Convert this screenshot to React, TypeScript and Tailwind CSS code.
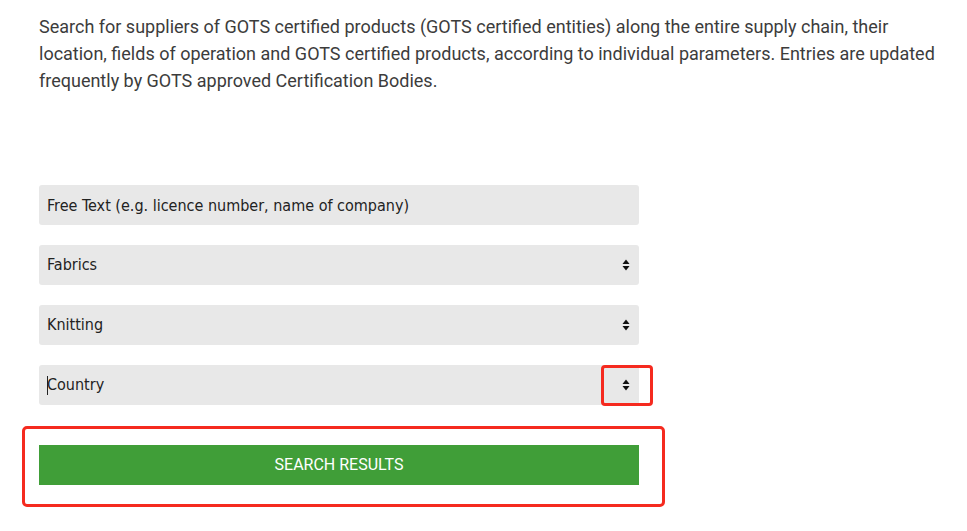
import { useState } from "react";

function Arrows() {
  return (
    <svg width="8" height="12" viewBox="0 0 8 12" className="shrink-0">
      <path d="M4 0.5 L7.5 5 L0.5 5 Z" fill="#111" />
      <path d="M4 11.5 L7.5 7 L0.5 7 Z" fill="#111" />
    </svg>
  );
}

function SelectField({ label, marked }: { label: string; marked?: boolean }) {
  return (
    <div className="relative flex h-10 w-[600px] items-center justify-between rounded-[3px] bg-[#e8e8e8] pl-2 pr-[9px]">
      <span className="text-[16px] text-[#222]">{label}</span>
      <Arrows />
      {marked && (
        <>
          <div className="pointer-events-none absolute left-2 top-[11px] h-[19px] w-px bg-[#222]" />
          <div className="pointer-events-none absolute left-[562px] top-0 h-[41px] w-[52px] rounded-[4px] border-[3px] border-[#f52a1f]" />
        </>
      )}
    </div>
  );
}

export default function App() {
  const [text, setText] = useState("");

  return (
    <div className="min-h-[531px] w-[967px] bg-white pl-[39px] pt-[13px]">
      <p
        className="w-[920px] text-[18px] leading-[27px] text-[#3c3c3c]"
        style={{ fontFamily: "Roboto, sans-serif" }}
      >
        Search for suppliers of GOTS certified products (GOTS certified entities) along the entire supply chain, their
        <br />
        location, fields of operation and GOTS certified products, according to individual parameters. Entries are updated
        <br />
        frequently by GOTS approved Certification Bodies.
      </p>

      <form
        className="mt-[91px] flex flex-col gap-5"
        style={{ fontFamily: '"DejaVu Sans Condensed", "DejaVu Sans", sans-serif' }}
        onSubmit={(e) => e.preventDefault()}
      >
        <input
          className="h-10 w-[600px] rounded-[3px] bg-[#e8e8e8] px-2 text-[16px] text-[#222] outline-none placeholder:text-[#222]"
          type="text"
          placeholder="Free Text (e.g. licence number, name of company)"
          value={text}
          onChange={(e) => setText(e.target.value)}
        />
        <SelectField label="Fabrics" />
        <SelectField label="Knitting" />
        <SelectField label="Country" marked />

        <div className="relative mt-5">
          <div className="pointer-events-none absolute -left-[17px] -top-[19px] h-[81px] w-[643px] rounded-[5px] border-[3px] border-[#f52a1f]" />
          <button
            type="submit"
            className="h-10 w-[600px] bg-[#409e38] text-[16px] text-white"
            style={{ fontFamily: "Roboto, sans-serif" }}
          >
            SEARCH RESULTS
          </button>
        </div>
      </form>
    </div>
  );
}
